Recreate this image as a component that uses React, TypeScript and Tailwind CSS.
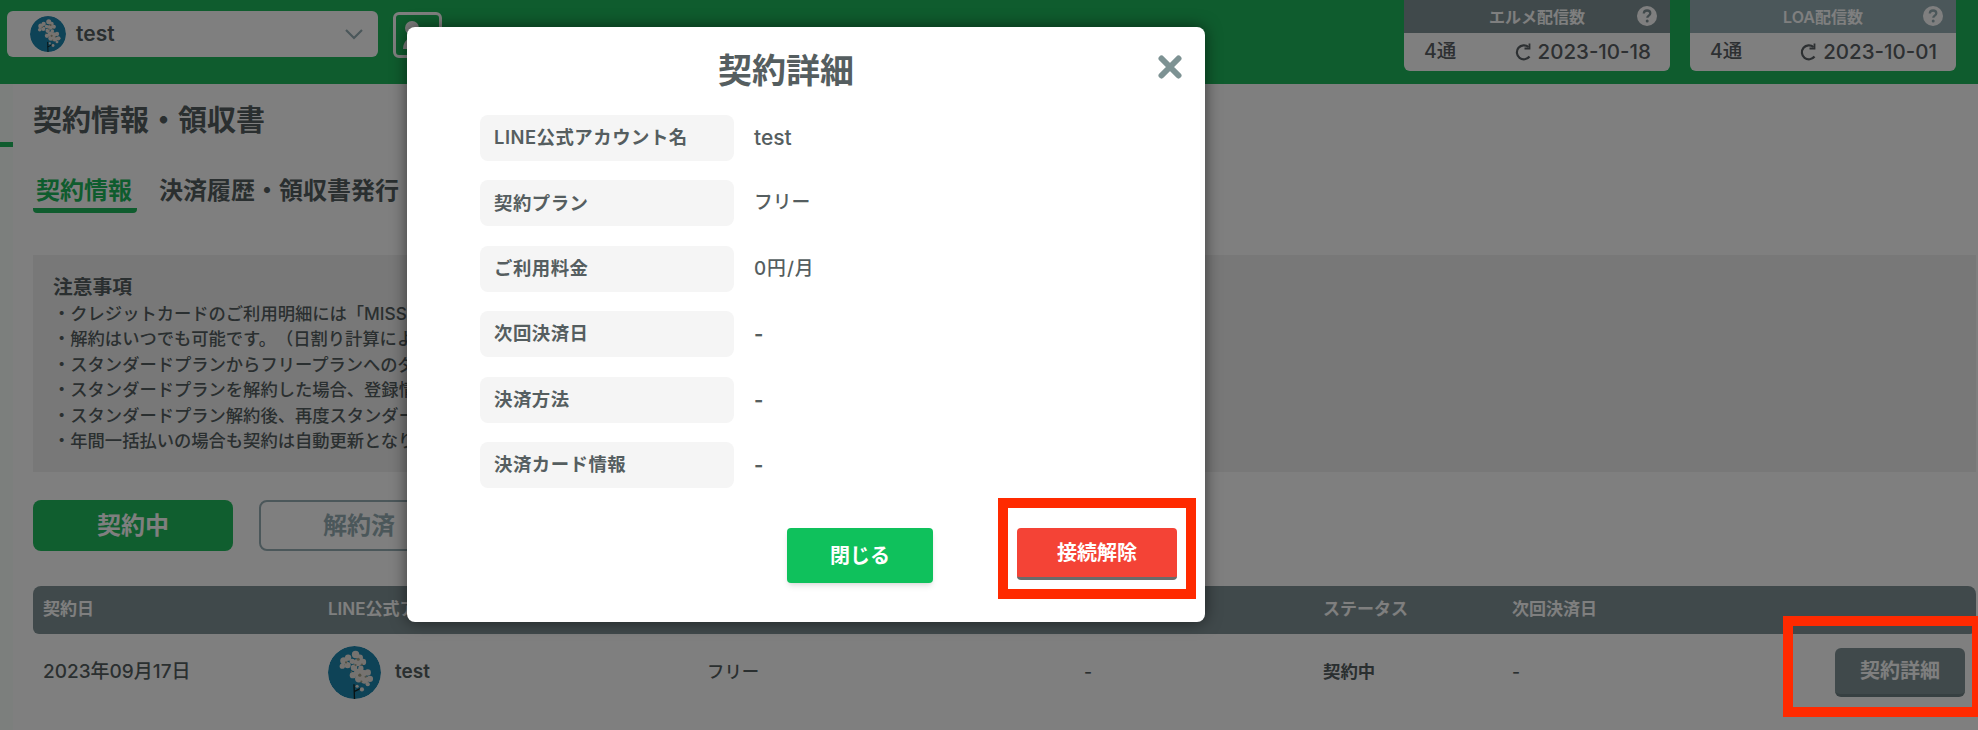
import React from "react";

const font = { fontFamily: '"Inter","Noto Sans CJK JP","Liberation Sans",sans-serif' };

function Avatar({ size }: { size: number }) {
  const light: [number, number, number][] = [
    [30, 28, 7], [38, 22, 6], [27, 38, 5], [37, 36, 6], [52, 16, 7], [60, 22, 6], [66, 30, 6], [56, 31, 7], [46, 29, 5], [49, 41, 6],
    [62, 42, 5], [47, 55, 6], [56, 50, 7], [66, 52, 7], [75, 50, 6], [58, 62, 7], [69, 64, 7], [79, 62, 6], [75, 72, 4], [64, 82, 4], [55, 76, 3],
  ];
  const shade: [number, number, number][] = [
    [34, 31, 2], [57, 25, 3], [64, 35, 2], [52, 36, 2], [60, 55, 3], [71, 58, 2], [63, 67, 2], [44, 48, 1.5],
  ];
  return (
    <svg width={size} height={size} viewBox="0 0 100 100" className="shrink-0 rounded-full">
      <circle cx="50" cy="50" r="50" fill="#1d86ae" />
      <path d="M50 100 L49 72 M49 86 L62 80" stroke="#122" strokeWidth="2.500" fill="none" />
      {light.map(([x, y, r]) => (
        <circle key={`${x}-${y}`} cx={x} cy={y} r={r} fill="#ece6e0" />
      ))}
      {shade.map(([x, y, r]) => (
        <circle key={`${x}-${y}`} cx={x} cy={y} r={r} fill="#a8a488" />
      ))}
    </svg>
  );
}

function Counter({ title, count, date, head, mark }: { title: string; count: string; date: string; head: string; mark: string }) {
  return (
    <div className="w-[266px] h-[71px] rounded-b-md overflow-hidden bg-white">
      <div className={`relative h-[33px] flex items-center justify-center text-white text-[16px] font-semibold ${head}`}>
        {title}
        <svg width="20" height="20" viewBox="0 0 20 20" className="absolute right-[13px] top-[6px]">
          <circle cx="10" cy="10" r="10" fill="#fff" />
          <path d="M6.800 7.600c0-2 1.500-3.100 3.300-3.100s3.200 1.100 3.200 2.800c0 2.400-3 2.300-3 4.500" fill="none" stroke={mark} strokeWidth="2.300" />
          <circle cx="10.200" cy="15" r="1.500" fill={mark} />
        </svg>
      </div>
      <div className="h-[38px] flex items-center justify-between pl-5 pr-[19px] text-[20px] font-medium text-[#5a6065]">
        <span className="text-[19.500px]">{count}</span>
        <span className="flex items-center gap-[5px] text-[20.500px]">
          <svg width="19" height="20" viewBox="0 0 19 20" fill="none" stroke="#5a6065" strokeWidth="2.200">
            <path d="M15.500 14.500A7 7 0 1 1 14.500 5" />
            <path d="M15.500 1.500v5h-5" strokeWidth="1.800" />
          </svg>
          {date}
        </span>
      </div>
    </div>
  );
}

function Row({ label, value, valueClass }: { label: string; value: string; valueClass: string }) {
  return (
    <div className="flex items-center h-[46px]">
      <div className="w-[254px] h-full flex items-center pl-[14px] bg-[#f5f5f5] rounded-lg text-[18.400px] tracking-[0.5px] font-semibold text-[#555e60]">
        {label}
      </div>
      <div className={`ml-5 text-[#555e60] ${valueClass}`}>{value}</div>
    </div>
  );
}

export default function App() {
  const rows: [string, string, string][] = [
    ["LINE公式アカウント名", "test", "text-[21px] font-medium"],
    ["契約プラン", "フリー", "text-[18.800px] font-medium"],
    ["ご利用料金", "0円/月", "text-[18.800px] tracking-[1px] font-medium"],
    ["次回決済日", "-", "text-[20px] font-bold"],
    ["決済方法", "-", "text-[20px] font-bold"],
    ["決済カード情報", "-", "text-[20px] font-bold"],
  ];
  const notes = [
    "・クレジットカードのご利用明細には「MISS",
    "・解約はいつでも可能です。（日割り計算によ",
    "・スタンダードプランからフリープランへのダ",
    "・スタンダードプランを解約した場合、登録情",
    "・スタンダードプラン解約後、再度スタンダー",
    "・年間一括払いの場合も契約は自動更新となり",
  ];
  return (
    <div style={font} className="relative w-[1978px] h-[730px] overflow-hidden bg-white text-[#666c71] [text-spacing-trim:space-all]">
      <header className="h-[84px] bg-[#1eb85c] flex items-start justify-between pl-[7px] pr-[22px]">
        <div className="flex items-start gap-[15px] pt-[11px]">
          <div className="w-[371px] h-[46px] bg-white rounded-md flex items-center pl-[23px] pr-[15px]">
            <Avatar size={36} />
            <span className="ml-[10px] text-[21px] font-semibold text-[#555e60]">test</span>
            <svg width="18" height="11" viewBox="0 0 18 11" fill="none" stroke="#96aeb4" strokeWidth="2.200" className="ml-auto">
              <path d="M1 1l8 8 8-8" />
            </svg>
          </div>
          <div className="w-[49px] h-[46px] mt-px border-[3px] border-white rounded-md flex flex-col items-start pl-[7px] pt-[6px]">
            <div className="ml-[2px] w-[14px] h-[14px] rounded-full bg-white" />
            <div className="w-[26px] h-[13px] rounded-t-full bg-white mt-px" />
          </div>
        </div>
        <div className="flex gap-5">
          <Counter title="エルメ配信数" count="4通" date="2023-10-18" head="bg-[#819396]" mark="#819396" />
          <Counter title="LOA配信数" count="4通" date="2023-10-01" head="bg-[#96aeb4]" mark="#96aeb4" />
        </div>
      </header>

      <div className="flex h-[646px]">
        <aside className="w-[13px] shrink-0 bg-[#f8fffb] relative">
          <div className="absolute left-0 top-[58px] w-[13px] h-[5px] bg-[#1eb85c]" />
        </aside>
        <main className="flex-1 min-w-0 pl-5 pr-[2px]">
          <h1 className="mt-[19px] text-[29px] leading-[36px] font-bold text-[#555e60]">契約情報・領収書</h1>
          <nav className="mt-[36px] flex items-start text-[24px] leading-[32px] font-bold">
            <div className="w-[104px] pr-[2px] text-center border-b-[5px] border-[#1eb85c] rounded-b-sm text-[#1eb85c] h-[38px]">契約情報</div>
            <div className="ml-[22px] text-[#555e60]">決済履歴・領収書発行</div>
          </nav>
          <section className="mt-[42px] h-[217px] bg-[#f0f0f0] pl-5 pt-[20px] text-[17.300px] leading-[25.500px] font-medium text-[#555e60]">
            <div className="font-semibold text-[19.800px]">注意事項</div>
            {notes.map((n) => (
              <div key={n} className="whitespace-nowrap">{n}</div>
            ))}
          </section>
          <div className="mt-[28px] flex gap-[26px]">
            <button className="w-[200px] h-[51px] rounded-lg bg-[#20bc5e] text-white text-[24px] font-bold">契約中</button>
            <button className="w-[200px] h-[51px] rounded-lg border-2 border-[#96aeb4] text-[#96aeb4] text-[24px] font-bold">解約済</button>
          </div>
          <div className="mt-[35px] h-[48px] flex items-center rounded-t-lg rounded-b-md bg-[#819396] text-white text-[17px] font-semibold">
            <div className="w-[295px] pl-[10px]">契約日</div>
            <div className="w-[996px] whitespace-nowrap">LINE公式ア</div>
            <div className="w-[189px] -ml-px">ステータス</div>
            <div>次回決済日</div>
          </div>
          <div className="h-[76px] flex items-center text-[17.400px] font-medium text-[#555e60]">
            <div className="w-[295px] pl-[10px] text-[19px] whitespace-nowrap">2023年09月17日</div>
            <div className="w-[380px] flex items-center">
              <Avatar size={53} />
              <span className="ml-[14px] text-[19px] font-semibold">test</span>
            </div>
            <div className="w-[377px] -ml-px">フリー</div>
            <div className="w-[239px]">-</div>
            <div className="w-[189px] font-semibold">契約中</div>
            <div className="w-[323px]">-</div>
            <button className="w-[130px] h-[49px] rounded-md bg-[#819396] border-b-[3px] border-[#6f8184] text-white text-[20px] font-bold">契約詳細</button>
          </div>
        </main>
      </div>

      {/* dimming layer */}
      <div className="absolute inset-0 bg-black/50" />

      {/* annotation round the page button */}
      <div className="absolute left-[1783px] top-[616px] w-[199px] h-[101px] border-[10px] border-[#ff2a00]" />

      {/* modal */}
      <div className="absolute left-[407px] top-[27px] w-[798px] h-[595px] bg-white rounded-lg shadow-[0_0_16px_rgba(0,0,0,0.55)] px-[73px]">
        <h2 className="mt-[22px] pr-[40px] text-center text-[34px] leading-[44px] font-bold text-[#555e60]">契約詳細</h2>
        <svg width="24" height="24" viewBox="0 0 24 24" className="absolute left-[751px] top-[28px]" stroke="#7d9293" strokeWidth="6" strokeLinecap="round">
          <path d="M3.500 3.500l17 17M20.500 3.500l-17 17" />
        </svg>
        <div className="mt-[22px] flex flex-col gap-[19.400px]">
          {rows.map(([l, v, c]) => (
            <Row key={l} label={l} value={v} valueClass={c} />
          ))}
        </div>
        <div className="absolute left-[380px] top-[501px] w-[146px] h-[55px] rounded-[4px] bg-[#0fc15c] shadow-md flex items-center justify-center text-white text-[20px] font-bold">閉じる</div>
        <div className="absolute left-[591px] top-[471px] w-[198px] h-[101px] border-[10px] border-[#ff2a00] flex items-start justify-center pt-[20px]">
          <div className="w-[160px] h-[52px] rounded-[4px] bg-[#f44336] border-b-[3px] border-[#6b6b6b] flex items-center justify-center text-white text-[20px] font-bold">接続解除</div>
        </div>
      </div>
    </div>
  );
}
